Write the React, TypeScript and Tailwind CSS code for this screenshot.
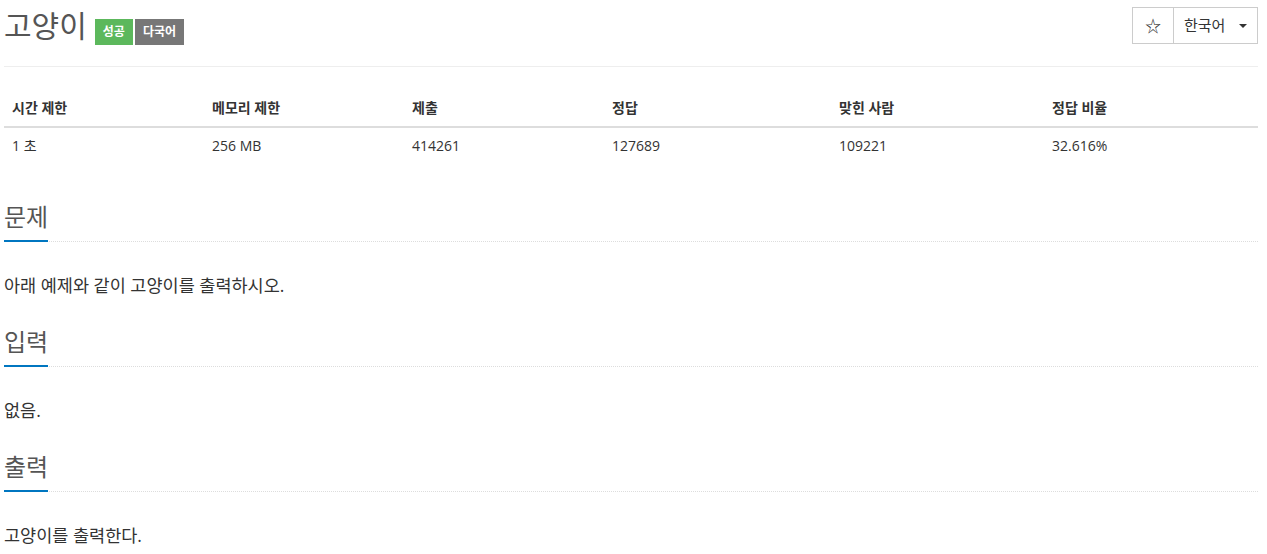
import React from 'react';

const stats = [
  { label: '시간 제한', value: '1 초' },
  { label: '메모리 제한', value: '256 MB' },
  { label: '제출', value: '414261' },
  { label: '정답', value: '127689' },
  { label: '맞힌 사람', value: '109221' },
  { label: '정답 비율', value: '32.616%' },
];

const sections = [
  { title: '문제', body: '아래 예제와 같이 고양이를 출력하시오.' },
  { title: '입력', body: '없음.' },
  { title: '출력', body: '고양이를 출력한다.' },
];

function Headline({ title }: { title: string }) {
  return (
    <div className="border-b border-dotted border-[#ddd]">
      <h2 className="inline-block text-[24px] leading-[24px] text-[#555] pb-[11px] border-b-2 border-[#0076c0] mb-[-1px]">
        {title}
      </h2>
    </div>
  );
}

export default function App() {
  return (
    <div className="ml-[4px] mr-[9px] font-['Open_Sans','Noto_Sans_CJK_KR',sans-serif] text-[#333] bg-white">
      <div className="flex justify-between items-start h-[67px] border-b border-[#eee]">
        <div className="flex items-start">
          <h1 className="mt-[6px] text-[30px] leading-[40px] text-[#555] font-normal">고양이</h1>
          <div className="flex gap-[2px] ml-[8px] mt-[19px]">
            <span className="h-[26px] leading-[26px] px-[8px] text-[12px] font-bold text-white bg-[#5cb85c]">성공</span>
            <span className="h-[26px] leading-[26px] px-[8px] text-[12px] font-bold text-white bg-[#777]">다국어</span>
          </div>
        </div>
        <div className="flex mt-[7px] h-[37px] border border-[#ccc] text-[15px]">
          <button className="w-[41px] flex items-center justify-center border-r border-[#ccc] text-[16px] text-[#333]">
            ☆
          </button>
          <button className="w-[83px] flex items-center pl-[10px] text-[#333]">
            <span>한국어</span>
            <span className="ml-[14px] w-0 h-0 border-x-[4px] border-x-transparent border-t-[4px] border-t-[#333]" />
          </button>
        </div>
      </div>

      <div className="mt-[23px] text-[14px]">
        <div className="grid grid-cols-[200px_200px_200px_227px_213px_1fr] border-b-2 border-[#ddd]">
          {stats.map((s) => (
            <div key={s.label} className="p-[8px] leading-[20px] font-bold">
              {s.label}
            </div>
          ))}
        </div>
        <div className="grid grid-cols-[200px_200px_200px_227px_213px_1fr]">
          {stats.map((s) => (
            <div key={s.label} className="p-[8px] leading-[20px]">
              {s.value}
            </div>
          ))}
        </div>
      </div>

      <div className="mt-[41px]">
        {sections.map((sec, i) => (
          <section key={sec.title} className={i > 0 ? 'mt-[33px]' : ''}>
            <Headline title={sec.title} />
            <p className="mt-[31px] text-[17.5px] leading-[24px]">{sec.body}</p>
          </section>
        ))}
      </div>
    </div>
  );
}
